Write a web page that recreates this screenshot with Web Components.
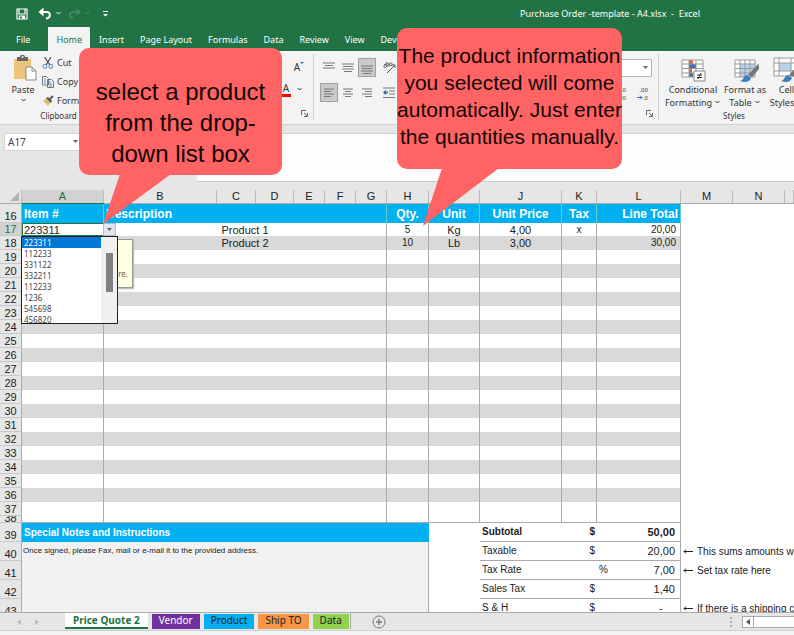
<!DOCTYPE html>
<html lang="en">
<head>
<meta charset="utf-8">
<title>Purchase Order -template - A4.xlsx - Excel</title>
<style>
html,body{margin:0;height:100%}
body{font-family:"Noto Sans","Open Sans",sans-serif;font-size:9px;color:#333;overflow:hidden}
</style>
</head>
<body>
<excel-window></excel-window>
<script>
const define = (name, html, setup) => customElements.define(name, class extends HTMLElement {
  constructor() {
    super();
    this.attachShadow({mode: 'open'}).innerHTML = '<style>*{box-sizing:border-box}button,input,select,textarea{font:inherit;color:inherit;border:0;margin:0;padding:0;background:none;outline:0;border-radius:0}svg{display:block;flex:none}</style>' + html;
  }
  connectedCallback() { if (setup) setup(this, this.shadowRoot); }
});
const caret = '<svg width="7" height="5" viewBox="0 0 7 5"><path d="M1.5 1l2 2 2-2" fill="none" stroke="currentColor"/></svg>';
const triangle = '<svg width="5" height="4" viewBox="0 0 5 4"><path d="M0 0h5L2.5 3z" fill="#666"/></svg>';

define('title-bar', `
<style>
:host{display:flex;align-items:center;height:27px;background:#217346;color:#fff;padding:0 94px 0 16px}
button{display:flex;align-items:center;color:#fff}
.redo{color:#4b9069}
nav{display:flex;align-items:center}
.save{margin-right:10px}.undo,.redo{gap:3px}.redo{margin-left:6px}.more{margin-left:12px}
h1{margin:0 0 0 auto;font-size:9px;font-weight:400;white-space:pre}
</style>
<nav aria-label="Quick access">
<button class="save" aria-label="Save"><svg width="12" height="12" viewBox="0 0 12 12"><path d="M1 1h10v10H1zM3 1v5h6V1M3.500 11V8h5v3" fill="none" stroke="#fff" stroke-width="1.200"/><path d="M6 8h2v3H6z" fill="#fff"/></svg></button>
<button class="undo" aria-label="Undo"><svg width="14" height="12" viewBox="0 0 14 12"><path d="M2 4h6.500c4.500 0 4.500 6 0 6.500H8" fill="none" stroke="#fff" stroke-width="1.900"/><path d="M5.500 -.5v9L.5 4z" fill="#fff"/></svg>${caret}</button>
<button class="redo" aria-label="Redo"><svg width="13" height="12" viewBox="0 0 14 12"><path d="M12 4H5.500C1 4 1 10 5.500 10.500H6" fill="none" stroke="currentColor" stroke-width="1.400"/><path d="M9 1l3.500 3L9 7" fill="none" stroke="currentColor" stroke-width="1.400"/></svg>${caret}</button>
<button class="more" aria-label="Customize toolbar"><svg width="5" height="6" viewBox="0 0 5 6"><path d="M0 .5h5" stroke="#fff"/><path d="M0 3h5L2.500 5.500z" fill="#fff"/></svg></button>
</nav>
<h1>Purchase Order -template - A4.xlsx  -  Excel</h1>`);

define('ribbon-tabs', `
<style>
:host{display:flex;height:24px;background:#217346;color:#fff;padding-left:7px;overflow:hidden}
button{height:24px;padding:0 8px;white-space:nowrap}
.file{padding:0 18px 0 9px}
.on{background:#f3f3f3;color:#217346;margin-right:1px}
.tell{margin-left:62px}
</style>
<button class="file">File</button><button class="on">Home</button><button>Insert</button><button>Page Layout</button><button>Formulas</button><button>Data</button><button>Review</button><button>View</button><button>Developer</button><button class="tell">Tell me what you want to do</button>`);

define('ribbon-group', `
<style>
:host{display:flex;flex-direction:column;flex:none;padding:3px 0 2px}
:host([line]) {background:linear-gradient(#d0d0d0,#d0d0d0) right 3px/1px 66px no-repeat}
div{flex:1;display:flex;min-height:0}
footer{display:flex;justify-content:center;font-size:8px;line-height:12px;min-height:12px}
</style>
<div><slot></slot></div><footer><slot name="label"></slot></footer>`);

const lines = (rows, y) => `<svg width="12" height="12" viewBox="0 0 12 12"><path d="${rows.map((r, i) => `M${r[0]} ${y + i * 2.5}h${r[1]}`).join('')}" stroke="#777" fill="none"/></svg>`;
const brush = '<path d="M26 1l1 1v4l-7 8-4-2z" fill="#777"/><path d="M15 12l4 3c-1 4-6 5-11 3 4-1 3-5 7-6z" fill="#3f7fc1"/>';
const launcher = '<svg slot="label" class="launch" width="7" height="7" viewBox="0 0 7 7"><path d="M.5 5V.500H5M3 3l3 3M6.500 3v3.500H3" fill="none" stroke="#666"/></svg>';
define('ribbon-bar', `
<style>
:host{display:flex;height:74px;background:#f3f3f3;border-bottom:1px solid #cfcfcf;overflow:hidden}
.clip{width:88px}.font{width:226px}.align{width:150px}.num{width:195px}
.style{width:150px}
.big{display:flex;flex-direction:column;align-items:center;line-height:13px;text-align:center}
.paste{flex:none;width:26px;margin:0 6px 0 10px;gap:2px;padding-top:1px}
.paste svg:first-child{margin-left:4px}
.stack{display:flex;flex-direction:column;gap:2px}
.stack button{display:flex;align-items:center;gap:3px;height:17px;white-space:nowrap}
.fontbox{display:grid;grid-template-columns:12px 14px;gap:9px 0;margin:7px 8px 0 auto;align-content:start;align-items:center;justify-items:center}
.fontbox b{font-weight:400;font-size:10px;line-height:12px;display:flex}
.red{border-bottom:3px solid red;padding:0 2px}
.launch{margin-left:auto;margin-right:6px}
.alignbox{display:grid;grid-template-columns:19px 19px 19px 26px;gap:6px 0;margin:4px 0 0 5px;align-content:start;align-items:center;justify-items:center}
.alignbox button{width:18px;height:19px;display:flex;align-items:center;justify-content:center}
.alignbox .sel{background:#cacaca;border:1px solid #a0a0a0}
.numbox{display:flex;flex-direction:column;margin:5px 7px 0 10px;flex:1;gap:9px}
.numbox select{appearance:none;background:#fff;border:1px solid #b5b5b5;height:18px;width:100%}
.combo{display:grid;align-items:center}.combo>*{grid-area:1/1}.combo svg{justify-self:end;margin-right:4px}
.dec{display:flex;gap:11px;justify-content:flex-end;font-size:6px;line-height:8px;padding-right:4px}
.dec span{display:flex;flex-direction:column;align-items:flex-end}
.dec b{font-weight:400}
.dec svg{display:inline-block}
.styles{display:flex;padding-left:5px}
.styles .big{padding-top:2px}
.styles span{display:flex;align-items:center;gap:2px}
.w1{width:58px}.w2{width:46px}.w3{width:37px}
</style>
<ribbon-group class="clip">
 <button class="big paste"><svg width="24" height="26" viewBox="0 0 24 26"><path d="M1 4h17v20H1z" fill="#ecc47a"/><path d="M4 2h3c0-3 5-3 5 0h3v4H4z" fill="#666"/><circle cx="9.500" cy="2" r="1" fill="#fff"/><path d="M13 12h6l4 4v9H13z" fill="#fff" stroke="#888"/><path d="M19 12v4h4" fill="none" stroke="#888"/></svg>Paste${caret}</button>
 <div class="stack">
 <button><svg width="12" height="12" viewBox="0 0 12 12"><path d="M2.500 0l5.500 8M9 0L4 8" stroke="#555" stroke-width="1.300"/><circle cx="2.800" cy="9.300" r="2" fill="none" stroke="#4a86c0"/><circle cx="8.800" cy="9.300" r="2" fill="none" stroke="#4a86c0"/></svg>Cut</button>
 <button><svg width="12" height="12" viewBox="0 0 12 12"><path d="M.5.500h4l2 2V9h-6zM5.500 3.500h4l2 2v6h-6z" fill="#f5f8fc" stroke="#777"/><path d="M2 3h2M2 5h2M2 7h2M7 6h2M7 8h3M7 10h3" stroke="#4a86c0"/></svg>Copy</button>
 <button><svg width="12" height="12" viewBox="0 0 12 12"><path d="M1 6l4-3 4 4-3 4z" fill="#e9b96a"/><path d="M4 3l2-1 4 4-1 2z" fill="#555"/><path d="M8 4l3-3" stroke="#555" stroke-width="2"/></svg>Format Painter</button>
 </div>
 <span slot="label">&nbsp; &nbsp; &nbsp; &nbsp; &nbsp; &nbsp; &nbsp; Clipboard</span>
</ribbon-group>
<ribbon-group class="font" line>
 <div class="fontbox">
 <i></i><b>A<svg width="4" height="4" viewBox="0 0 4 4"><path d="M0 1h4L2 3z" fill="#2b6cb0"/></svg></b><b class="red">A</b>${caret}</div>
 ${launcher}
</ribbon-group>
<ribbon-group class="align">
 <div class="alignbox">
 <button aria-label="Top align">${lines([[0,12],[2,8],[0,12]],1)}</button>
 <button aria-label="Middle align">${lines([[0,12],[1,10],[0,12],[2,8]],2)}</button>
 <button class="sel" aria-label="Bottom align">${lines([[0,12],[1,10],[0,12],[2,8]],4)}</button>
 <button aria-label="Orientation"><svg width="13" height="13" viewBox="0 0 13 13"><path d="M4 12l8-8M9 4h3v3M1 4c2-2 4-1 3 1S0 7 1 5s3-1 4 1M3 1l5 4c2-1 1-4-1-3s-1 3 0 3" fill="none" stroke="#555"/></svg></button>
 <button class="sel" aria-label="Align left">${lines([[1,10],[1,7],[1,10],[1,7]],2)}</button>
 <button aria-label="Center">${lines([[1,10],[3,6],[1,10],[3,6]],2)}</button>
 <button aria-label="Align right">${lines([[1,10],[4,7],[1,10],[4,7]],2)}</button>
 <button aria-label="Decrease indent"><svg width="12" height="12" viewBox="0 0 12 12"><path d="M0 1h12M6 4h6M6 7h6M0 10.500h12" stroke="#777"/><path d="M5 5.500H1M3 3.500l-2 2 2 2" fill="none" stroke="#2b6cb0" stroke-width="1.400"/></svg></button>
 </div>
</ribbon-group>
<ribbon-group class="num" line>
 <div class="numbox"><div class="combo"><select aria-label="Number format"><option></option></select>${triangle}</div>
 <div class="dec"><span><b>←.0</b><b>.00</b></span><span><b>.00</b><b><svg width="6" height="5" viewBox="0 0 6 5"><path d="M0 2.500h5M3 .5l2 2-2 2" fill="none" stroke="#2b6cb0"/></svg>.0</b></span></div></div>
 ${launcher}
</ribbon-group>
<ribbon-group class="style">
 <div class="styles">
 <button class="big w1"><svg width="26" height="27" viewBox="0 0 26 27"><path d="M2 4h21v17H2z" fill="#fff"/><path d="M9 4h4v4H9zM9 13h3v4H9z" fill="#d9623b"/><path d="M9 8h7v4H9zM9 17h4v4H9z" fill="#3f6fae"/><path d="M2 4h21v17H2zM9 4v17M16 4v17M2 8h21M2 12.500h21M2 17h21" fill="none" stroke="#999"/><path d="M14 15h11v10H14z" fill="#fff" stroke="#888"/><path d="M17 19h5M17 21.500h5M21 17l-3 6" stroke="#333"/></svg>Conditional<span>Formatting ${caret}</span></button>
 <button class="big w2"><svg width="29" height="27" viewBox="0 0 29 27"><path d="M4 4h20v17H4z" fill="#fff"/><path d="M9 8h15v13H9z" fill="#b9d2ec"/><path d="M4 4h20v17H4zM9 4v17M14 4v17M19 4v17M4 8h20M4 12.500h20M4 17h20" fill="none" stroke="#999"/><g transform="translate(1 7)">${brush}</g></svg>Format as<span>Table ${caret}</span></button>
 <button class="big w3"><svg width="29" height="27" viewBox="0 0 29 27"><path d="M2 2h22v18H2z" fill="#fff"/><path d="M7 7h12v8H7z" fill="#b9d2ec"/><path d="M2 2h22v18H2zM7 2v18M19 2v18M2 7h22M2 15h22" fill="none" stroke="#999"/><g transform="translate(1 7)">${brush}</g></svg>Cell<span>Styles ${caret}</span></button>
 </div>
 <span slot="label">Styles</span>
</ribbon-group>`);

define('formula-bar', `
<style>
:host{display:flex;gap:115px;height:57px;padding-top:8px;padding-left:4px;background:#e6e6e6}
label{display:flex;align-items:center;width:78px;height:18px;background:#fff;border:1px solid #d4d4d4;color:#444}
label input{flex:1;min-width:0;padding-left:3px;font-size:10px}
label svg{margin-right:3px}
textarea{flex:1;min-width:0;background:#fdfdfd;border-bottom:1px solid #c8c8c8;border-top:1px solid #d0d0d0;resize:none}
</style>
<label><input aria-label="Name box" value="A17">${triangle}</label>
<textarea aria-label="Formula"></textarea>`);

define('validation-list', `
<style>
:host{display:flex;width:97px;height:88px;border:1px solid #222;background:#fff;overflow:hidden;font-family:"Noto Sans","Open Sans",sans-serif;font-size:8px}
select{appearance:none;flex:1;width:0;height:100px;overflow:hidden;color:#444;scrollbar-width:none}
option{font:inherit;height:11px;min-height:11px;line-height:11px;padding:0 0 0 2px}
option:checked{background:#0078d7 linear-gradient(#0078d7,#0078d7);color:#fff}
i{width:16px;background:#f0f0f0;padding:16px 4px 0 5px}
i::before{content:"";display:block;height:39px;background:#808080}
</style>
<select size="9" aria-label="Item number"><option selected>223311</option><option>112233</option><option>331122</option><option>332211</option><option>112233</option><option>1236</option><option>545698</option><option>456820</option></select><i></i>`);

define('sheet-grid', `
<style>
:host{display:block;flex:1;min-height:0;overflow:hidden;background:#fff;font-family:"Liberation Sans",Arial,sans-serif;font-size:11px;color:#222}
table{table-layout:fixed;width:100%;border-collapse:separate;border-spacing:0}
td,th{padding:0;font-weight:400;white-space:nowrap;line-height:12px}
thead tr{height:22px}
thead th{background:#e6e6e6;border-bottom:1px solid #ababab;vertical-align:bottom;height:22px}
thead div{margin-top:8px;height:13px;line-height:13px;border-right:1px solid #bbb}
thead .cur div{background:#d2d2d2;color:#217346}
thead .cur{border-bottom:1px solid #217346}
thead .corner div{display:flex;justify-content:flex-end;align-items:flex-end;padding:0 2px 2px 0}
tbody th.n{background:#e6e6e6;border-right:1px solid #ababab;border-bottom:1px solid #c8c8c8;vertical-align:bottom;text-align:center}
th.n div{display:flex;align-items:flex-end;justify-content:center;overflow:hidden;line-height:11px;height:12px}
th.n.cur{background:#d2d2d2;color:#217346}
th.n .slim{height:6px;line-height:8px}
.g{border-right:1px solid #aaa;text-align:center}
.band .g{background:#d9d9d9}
.h{background:#00b0f0;color:#fff;font-weight:700;font-size:12px;text-align:center;border-right:1px solid #6cc}
.h.l{text-align:left;padding-left:2px}.h.r{text-align:right;padding-right:2px}
.g.l{text-align:left;padding-left:2px}.g.s{font-size:10px}.g.r{text-align:right;padding-right:4px;font-size:10px}
.g.sel{position:relative;outline:1px solid #217346;outline-offset:-1px}
.drop{position:absolute;left:100%;top:0;width:13px;height:13px;background:#dfe3ec;border:1px solid #b4bccb;display:flex;align-items:center;justify-content:center;z-index:2}
validation-list{position:absolute;left:-1px;top:100%;z-index:3}
.tip{position:absolute;left:18px;top:16px;width:93px;height:49px;background:#ffffe1;border:1px solid #999;box-shadow:1px 1px 1px #bbb;padding:28px 4px 0 0;text-align:right;font:8px/12px "Noto Sans",sans-serif;color:#666;z-index:1}
.nt{background:#00b0f0;color:#fff;font-weight:700;font-size:10px;text-align:left;padding-left:2px}
.notes{background:#f1f1f1;border-right:1px solid #aaa;vertical-align:top;font-size:8px;padding:3px 0 0 1px}
.t{font-size:10px;border-bottom:1px solid #aaa}
.j{padding-left:2px}.k{text-align:right;padding-right:2px}
.v{border-right:1px solid #aaa;font-size:11px}
.v div{display:flex;justify-content:space-between;padding:0 5px 0 2px}
.v div span:first-child{font-size:10px}
.b{font-weight:700}
.m{font-size:10px;padding-left:2px}
.m span{display:flex;align-items:center;gap:4px}
.end .g{border-bottom:1px solid #aaa}
</style>
<table>
<colgroup></colgroup><thead><tr></tr></thead><tbody></tbody></table>`, (el, root) => {
  const widths = [22,82,113,39,38,31,31,31,42,51,82,35,84,52,52];
  root.querySelector('colgroup').innerHTML = widths.map(w => `<col style="width:${w}px">`).join('') + '<col>';
  root.querySelector('thead tr').innerHTML = '<th class="corner"><div><svg width="9" height="9" viewBox="0 0 9 9"><path d="M9 0v9H0z" fill="#b4b4b4"/></svg></div></th>' +
    [...'ABCDEFGHIJKLMNO'].map(c => `<th${c === 'A' ? ' class="cur"' : ''}><div>${c === 'O' ? '' : c}</div></th>`).join('');
  const num = (n, cls = '') => `<th class="n ${cls}" scope="row"><div>${n}</div></th>`;
  const blank = '<td colspan="3"></td>';
  let out = `<tr style="height:19px">${num(16)}<th class="h l">Item #</th><th class="h l" colspan="6">Description</th><th class="h">Qty.</th><th class="h">Unit</th><th class="h">Unit Price</th><th class="h">Tax</th><th class="h r">Line Total</th>${blank}</tr>`;
  const picker = `223311<button class="drop" aria-label="Open list">${triangle}</button><span class="tip">here.</span><validation-list></validation-list>`;
  const data = {17: [picker, 'Product 1', '5', 'Kg', '4,00', 'x', '20,00'], 18: ['', 'Product 2', '10', 'Lb', '3,00', '', '30,00']};
  for (let n = 17; n <= 38; n++) {
    const d = data[n] || Array(7).fill('');
    const h = n === 17 ? 13 : n === 38 ? 7 : 14;
    const cls = (n % 2 === 0 && n < 38 ? 'band' : '') + (n === 38 ? 'end' : '');
    out += `<tr class="${cls}" style="height:${h}px">${n === 38 ? '<th class="n" scope="row"><div class="slim">38</div></th>' : num(n, n === 17 ? 'cur' : '')}<td class="g l ${n === 17 ? 'sel' : ''}">${d[0]}</td><td class="g" colspan="6">${d[1]}</td><td class="g s">${d[2]}</td><td class="g">${d[3]}</td><td class="g">${d[4]}</td><td class="g s">${d[5]}</td><td class="g r">${d[6]}</td>${blank}</tr>`;
  }
  const arrow = '<svg width="10" height="7" viewBox="0 0 10 7"><path d="M10 3.500H1M3 1.500l-2 2 2 2" fill="none" stroke="#222"/></svg>';
  const totals = [[39,'Subtotal','$','','50,00',''],[40,'Taxable','$','','20,00','This sums amounts with tax'],[41,'Tax Rate','','%','7,00','Set tax rate here'],[42,'Sales Tax','$','','1,40',''],[43,'S &amp; H','$','','- &nbsp; &nbsp;','If there is a shipping cost']];
  for (const [n, a, k, p, v, m] of totals) {
    const b = n === 39 ? 'b' : '';
    out += `<tr style="height:19px">${num(n)}${n === 39 ? '<th class="nt" colspan="8">Special Notes and Instructions</th>' : n === 40 ? '<td class="notes" colspan="8" rowspan="4">Once signed, please Fax, mail or e-mail it to the provided address.</td>' : ''}<td></td><td class="t j ${b}">${a}</td><td class="t k ${b}">${k}</td><td class="t v ${b}"><div><span>${p}</span><span>${v}</span></div></td><td class="m" colspan="3">${m ? `<span>${arrow}${m}</span>` : ''}</td></tr>`;
  }
  root.querySelector('tbody').innerHTML = out;
});

define('sheet-tabs', `
<style>
:host{display:flex;align-items:center;height:18px;flex:none;background:#e6e6e6;border-top:1px solid #ababab;font-size:10px;overflow:hidden}
.nav{display:flex;gap:14px;width:65px;padding-left:17px}
.tabs{display:flex;gap:4px;align-self:flex-start;border-right:1px solid #aaa;padding-right:1px}
.tabs button{height:15px;line-height:12px;padding:0 7px;margin-top:1px;color:#222;white-space:nowrap;display:flex}
.tabs .on{background:#fff;color:#217346;font-weight:700;border-bottom:2px solid #217346;height:16px;margin:0;padding:0 8px;line-height:14px}
.add{margin-left:21px}
.scroll{margin-left:auto;display:flex;align-items:center;gap:10px;height:12px}
.track{display:flex;width:52px;height:12px}
.track button{width:12px;border:1px solid #aaa;background:#fff;display:flex;align-items:center;justify-content:center}
.track i{flex:1;border:1px solid #aaa;border-right:0;border-left:0;background:#fff}
</style>
<div class="nav"><button aria-label="Previous sheet"><svg width="4" height="6" viewBox="0 0 4 6"><path d="M4 0v6L0 3z" fill="#bbb"/></svg></button><button aria-label="Next sheet"><svg width="4" height="6" viewBox="0 0 4 6"><path d="M0 0v6l4-3z" fill="#bbb"/></svg></button></div>
<div class="tabs"><button class="on">Price Quote 2</button><button style="background:#7030a0;color:#fff">Vendor</button><button style="background:#00b0f0">Product</button><button style="background:#f79646">Ship TO</button><button style="background:#92d050">Data</button></div>
<button class="add" aria-label="New sheet"><svg width="14" height="14" viewBox="0 0 14 14"><circle cx="7" cy="7" r="6" fill="none" stroke="#777"/><path d="M7 4v6M4 7h6" stroke="#777" stroke-width="1.400"/></svg></button>
<div class="scroll"><svg width="2" height="10" viewBox="0 0 2 10"><path d="M0 1h2M0 5h2M0 9h2" stroke="#999" stroke-width="1.500"/></svg><div class="track"><button aria-label="Scroll left"><svg width="4" height="6" viewBox="0 0 4 6"><path d="M4 0v6L0 3z" fill="#555"/></svg></button><i></i></div></div>`);

define('callout-bubble', `
<style>
:host{position:absolute;z-index:10;display:flex;align-items:center;justify-content:center;background:#ff6363;border-radius:10px;text-align:center;color:#120505;font-family:"Liberation Sans",Arial,sans-serif}
p{margin:0;white-space:nowrap}
svg{position:absolute;left:0;top:100%;overflow:visible}
</style>
<svg width="1" height="1"><path fill="#ff6363"/></svg><p><slot></slot></p>`, (el, root) => root.querySelector('path').setAttribute('d', el.getAttribute('tail')));

define('excel-window', `
<style>
:host{display:flex;flex-direction:column;height:100vh;position:relative;overflow:hidden}
title-bar,ribbon-tabs,ribbon-bar,formula-bar{flex:none}
.status{height:5px;flex:none;background:#f3f3f3;border-top:1px solid #d0d0d0}
.one{left:79px;top:48px;width:203px;height:127px;font-size:24px;line-height:31px;padding-top:22px}
.two{left:397px;top:28px;width:225px;height:141px;font-size:21px;line-height:27px;padding-bottom:5px}
</style>
<title-bar></title-bar><ribbon-tabs></ribbon-tabs><ribbon-bar></ribbon-bar><formula-bar></formula-bar><sheet-grid></sheet-grid><sheet-tabs></sheet-tabs><div class="status"></div>
<callout-bubble class="one" tail="M41 -1H92L24 49z">select a product<br>from the drop-<br>down list box</callout-bubble>
<callout-bubble class="two" tail="M45 -1H102L26 57z">The product information<br>you selected will come<br>automatically. Just enter<br>the quantities manually.</callout-bubble>`);
</script>
</body>
</html>
